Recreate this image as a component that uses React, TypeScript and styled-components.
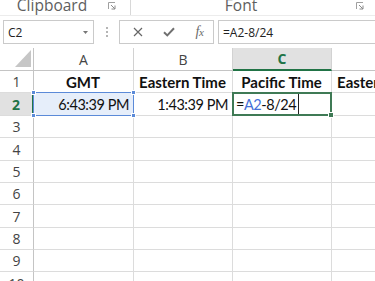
import React from "react";
import styled, { createGlobalStyle } from "styled-components";

const GlobalStyle = createGlobalStyle`
  html, body {
    margin: 0;
    padding: 0;
    background: #fff;
  }
  body {
    font-family: "Open Sans", "Liberation Sans", sans-serif;
  }
`;

const Window = styled.div`
  width: 375px;
  height: 281px;
  overflow: hidden;
  background: #fff;
`;

const Ribbon = styled.div`
  display: flex;
  height: 16px;
  box-sizing: border-box;
  border-bottom: 1px solid #ececec;
  overflow: hidden;
`;

const RibbonGroup = styled.div<{ $w: number; $pad: number; $sep?: boolean }>`
  display: flex;
  flex-shrink: 0;
  width: ${(p) => p.$w}px;
  box-sizing: border-box;
  padding-right: ${(p) => p.$pad}px;
  border-right: ${(p) => (p.$sep ? "1px solid #d8d8d8" : "none")};
`;

const RibbonLabel = styled.div<{ $gap: number }>`
  flex: 1;
  margin-right: ${(p) => p.$gap}px;
  margin-top: -3px;
  text-align: center;
  font-size: 15.5px;
  line-height: 16px;
  color: #5e5e5e;
`;

const Launcher = styled.svg`
  flex-shrink: 0;
  width: 8px;
  height: 8px;
  margin-top: 2px;
`;

const FormulaBar = styled.div`
  display: flex;
  align-items: center;
  height: 24px;
  margin: 4px 0 4px 3px;
`;

const NameBox = styled.div`
  display: flex;
  align-items: center;
  justify-content: space-between;
  width: 91px;
  height: 24px;
  box-sizing: border-box;
  padding: 0 5px 0 4px;
  border: 1px solid #cacaca;
  font-size: 12px;
  color: #222;
`;

const Grip = styled.div`
  display: flex;
  justify-content: center;
  width: 25px;
`;

const FuncBox = styled.div`
  display: grid;
  grid-template-columns: repeat(3, 31px);
  align-items: center;
  justify-items: center;
  width: 95px;
  height: 24px;
  box-sizing: border-box;
  padding-left: 2px;
  border: 1px solid #cacaca;
`;

const Fx = styled.span`
  font-family: "Liberation Serif", "DejaVu Serif", serif;
  font-style: italic;
  font-size: 14px;
  color: #6a6a6a;
  letter-spacing: -0.5px;

  small {
    font-size: 11px;
  }
`;

const FormulaInput = styled.div`
  flex: 1;
  display: flex;
  align-items: center;
  height: 24px;
  margin-left: 4px;
  margin-right: -4px;
  box-sizing: border-box;
  padding-left: 4px;
  border: 1px solid #cacaca;
  font-size: 12px;
  color: #222;
`;

const Sheet = styled.div`
  display: flex;
  flex-direction: column;
`;

const Row = styled.div<{ $h: number }>`
  display: flex;
  flex-shrink: 0;
  height: ${(p) => p.$h}px;
`;

const Corner = styled.div`
  display: flex;
  align-items: flex-end;
  justify-content: flex-end;
  flex-shrink: 0;
  width: 34px;
  box-sizing: border-box;
  padding: 0 2px 3px 0;
  border-right: 1px solid #c4c4c4;
  border-bottom: 1px solid #c4c4c4;
`;

const ColHead = styled.div<{ $w: number; $active?: boolean }>`
  display: flex;
  align-items: center;
  justify-content: center;
  flex-shrink: 0;
  width: ${(p) => p.$w}px;
  box-sizing: border-box;
  border-right: 1px solid #d2d2d2;
  border-bottom: ${(p) => (p.$active ? "2px solid #217346" : "1px solid #c4c4c4")};
  background: ${(p) => (p.$active ? "#e1e1e1" : "#fff")};
  color: ${(p) => (p.$active ? "#217346" : "#444")};
  font-weight: ${(p) => (p.$active ? 700 : 400)};
  font-size: 14px;
`;

const RowHead = styled.div<{ $active?: boolean }>`
  display: flex;
  align-items: center;
  justify-content: center;
  flex-shrink: 0;
  width: 34px;
  box-sizing: border-box;
  border-right: ${(p) => (p.$active ? "2px solid #217346" : "1px solid #c4c4c4")};
  border-bottom: 1px solid #dcdcdc;
  background: ${(p) => (p.$active ? "#e1e1e1" : "#fff")};
  color: ${(p) => (p.$active ? "#217346" : "#444")};
  font-weight: ${(p) => (p.$active ? 700 : 400)};
  font-size: 14px;
`;

type Align = "left" | "center" | "right";

const Cell = styled.div<{ $w: number; $align?: Align; $bold?: boolean; $ref?: boolean; $active?: boolean }>`
  position: relative;
  display: flex;
  align-items: center;
  justify-content: ${(p) =>
    p.$align === "right" ? "flex-end" : p.$align === "center" ? "center" : "flex-start"};
  flex-shrink: 0;
  width: ${(p) => p.$w}px;
  box-sizing: border-box;
  padding: 0 4px 0 3px;
  border-right: 1px solid #dcdcdc;
  border-bottom: 1px solid #dcdcdc;
  background: ${(p) => (p.$ref ? "#e6eefa" : "#fff")};
  font-family: Lato, "Liberation Sans", sans-serif;
  font-size: ${(p) => (p.$bold ? 15 : 14.5)}px;
  letter-spacing: ${(p) => (p.$bold ? 0 : -0.45)}px;
  font-weight: ${(p) => (p.$bold ? 700 : 400)};
  color: #111;
  white-space: nowrap;

  ${(p) =>
    p.$ref &&
    `
    &::after {
      content: "";
      position: absolute;
      top: -1px; left: -1px; right: -1px; bottom: -1px;
      border: 1px solid #5b8ad8;
      pointer-events: none;
    }
  `}

  ${(p) =>
    p.$active &&
    `
    &::after {
      content: "";
      position: absolute;
      top: -1px; left: -1px; right: -1px; bottom: -1px;
      border: 2px solid #3f7a55;
      pointer-events: none;
    }
  `}
`;

const Handle = styled.span<{ $v: "top" | "bottom"; $h: "left" | "right"; $color: string; $size: number }>`
  position: absolute;
  z-index: 2;
  width: ${(p) => p.$size}px;
  height: ${(p) => p.$size}px;
  background: ${(p) => p.$color};
  border: 1px solid #fff;
  ${(p) => p.$v}: -${(p) => Math.ceil(p.$size / 2) + 1}px;
  ${(p) => p.$h}: -${(p) => Math.ceil(p.$size / 2) + 1}px;
`;

const RefText = styled.span`
  color: #4470d8;
`;

const Caret = styled.span`
  display: inline-block;
  width: 1px;
  height: 20px;
  margin-left: 2px;
  background: #222;
`;

const colWidths = [100, 99, 99, 99];
const rowHeights = [22, 23, 22, 23, 22, 22, 23, 22, 22, 23];

const LauncherIcon = () => (
  <Launcher viewBox="0 0 8 8">
    <path d="M0.5 7V0.5H7" stroke="#a0a0a0" fill="none" strokeWidth="1" />
    <path d="M3 3L7 7M7 3.5V7H3.5" stroke="#8a8a8a" fill="none" strokeWidth="1" />
  </Launcher>
);

export default function App() {
  const renderCells = (row: number) => {
    if (row === 1) {
      return (
        <>
          <Cell $w={colWidths[0]} $align="center" $bold>GMT</Cell>
          <Cell $w={colWidths[1]} $align="center" $bold>Eastern Time</Cell>
          <Cell $w={colWidths[2]} $align="center" $bold>Pacific Time</Cell>
          <Cell $w={colWidths[3]} $align="center" $bold>Eastern Time</Cell>
        </>
      );
    }
    if (row === 2) {
      return (
        <>
          <Cell $w={colWidths[0]} $align="right" $ref>
            6:43:39 PM
            <Handle $v="top" $h="left" $color="#5b8ad8" $size={3} />
            <Handle $v="top" $h="right" $color="#5b8ad8" $size={3} />
            <Handle $v="bottom" $h="left" $color="#5b8ad8" $size={3} />
            <Handle $v="bottom" $h="right" $color="#5b8ad8" $size={3} />
          </Cell>
          <Cell $w={colWidths[1]} $align="right">1:43:39 PM</Cell>
          <Cell $w={colWidths[2]} $active>
            =<RefText>A2</RefText>-8/24
            <Caret />
            <Handle $v="bottom" $h="right" $color="#3f7a55" $size={4} />
          </Cell>
          <Cell $w={colWidths[3]} />
        </>
      );
    }
    return colWidths.map((w, i) => <Cell key={i} $w={w} />);
  };

  return (
    <Window>
      <GlobalStyle />
      <Ribbon>
        <RibbonGroup $w={131} $pad={14} $sep>
          <RibbonLabel $gap={4}>Clipboard</RibbonLabel>
          <LauncherIcon />
        </RibbonGroup>
        <RibbonGroup $w={244} $pad={11}>
          <RibbonLabel $gap={5}>Font</RibbonLabel>
          <LauncherIcon />
        </RibbonGroup>
      </Ribbon>

      <FormulaBar>
        <NameBox>
          <span>C2</span>
          <svg width="5" height="3" viewBox="0 0 5 3">
            <path d="M0 0H5L2.5 3Z" fill="#777" />
          </svg>
        </NameBox>
        <Grip>
          <svg width="2" height="10" viewBox="0 0 2 10">
            <rect x="0" y="0" width="2" height="2" fill="#b5b5b5" />
            <rect x="0" y="4" width="2" height="2" fill="#b5b5b5" />
            <rect x="0" y="8" width="2" height="2" fill="#b5b5b5" />
          </svg>
        </Grip>
        <FuncBox>
          <svg width="10" height="10" viewBox="0 0 10 10">
            <path d="M1 1L9 9M9 1L1 9" stroke="#666" strokeWidth="1.2" fill="none" />
          </svg>
          <svg width="12" height="10" viewBox="0 0 12 10">
            <path d="M1 5.2L4.3 8.4L11 1.3" stroke="#707070" strokeWidth="2" fill="none" />
          </svg>
          <Fx>
            f<small>x</small>
          </Fx>
        </FuncBox>
        <FormulaInput>=A2-8/24</FormulaInput>
      </FormulaBar>

      <Sheet>
        <Row $h={23}>
          <Corner>
            <svg width="16" height="17" viewBox="0 0 16 17">
              <path d="M0 17H16V0Z" fill="#c6c6c6" />
            </svg>
          </Corner>
          <ColHead $w={colWidths[0]}>A</ColHead>
          <ColHead $w={colWidths[1]}>B</ColHead>
          <ColHead $w={colWidths[2]} $active>C</ColHead>
          <ColHead $w={colWidths[3]}>D</ColHead>
        </Row>
        {rowHeights.map((h, i) => (
          <Row key={i} $h={h}>
            <RowHead $active={i + 1 === 2}>{i + 1}</RowHead>
            {renderCells(i + 1)}
          </Row>
        ))}
      </Sheet>
    </Window>
  );
}
